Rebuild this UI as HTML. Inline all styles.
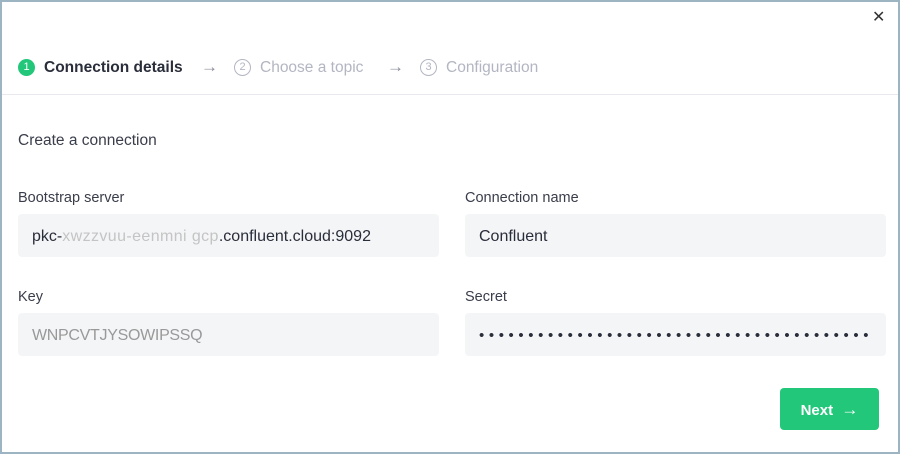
<!DOCTYPE html>
<html><head><style>
*{margin:0;padding:0;box-sizing:border-box}
body{width:900px;height:454px;background:#fff;font-family:"Liberation Sans",sans-serif;position:relative;overflow:hidden}
.a{position:absolute;white-space:nowrap}
.in{position:absolute;background:#f4f5f7;border-radius:4px;height:43px;font-size:16px;color:#2a2d3a;line-height:46px;padding-left:14px;white-space:nowrap}
.lbl{position:absolute;font-size:14.5px;color:#3a3d4a}
.g{color:#b3b6c2}
</style></head><body>
<div class="a" style="left:0;top:0;width:900px;height:454px;border:2px solid #9db4c3"></div>
<div class="a" style="left:872px;top:7px;font-size:16px;color:#333">✕</div>
<div class="a" style="left:18px;top:59px;width:17px;height:17px;border-radius:50%;background:#22c77a;color:#fff;font-size:11px;text-align:center;line-height:17px">1</div>
<div class="a" style="left:44px;top:59px;font-size:15.5px;font-weight:bold;color:#2a2d3a">Connection details</div>
<div class="a" style="left:201px;top:57px;font-size:17px;color:#8a8d99">→</div>
<div class="a g" style="left:234px;top:59px;width:17px;height:17px;border-radius:50%;border:1.3px solid #b3b6c2;font-size:11px;text-align:center;line-height:15px">2</div>
<div class="a g" style="left:260px;top:59px;font-size:15.5px">Choose a topic</div>
<div class="a" style="left:387px;top:57px;font-size:17px;color:#8a8d99">→</div>
<div class="a g" style="left:420px;top:59px;width:17px;height:17px;border-radius:50%;border:1.3px solid #b3b6c2;font-size:11px;text-align:center;line-height:15px">3</div>
<div class="a g" style="left:446px;top:59px;font-size:15.5px">Configuration</div>
<div class="a" style="left:2px;top:94px;width:896px;height:1px;background:#e8e9ee"></div>
<div class="a" style="left:18px;top:132px;font-size:15.5px;color:#3a3d4a">Create a connection</div>
<div class="lbl" style="left:18px;top:190px">Bootstrap server</div>
<div class="lbl" style="left:465px;top:190px">Connection name</div>
<div class="in" style="left:18px;top:214px;width:421px">pkc-<span style="color:#c4c4c4;letter-spacing:0.4px">xwzzvuu-eenmni gcp</span>.confluent.cloud:9092</div>
<div class="in" style="left:465px;top:214px;width:421px">Confluent</div>
<div class="lbl" style="left:18px;top:289px">Key</div>
<div class="lbl" style="left:465px;top:289px">Secret</div>
<div class="in" style="left:18px;top:313px;width:421px;color:#999;letter-spacing:-0.3px">WNPCVTJYSOWIPSSQ</div>
<div class="in" style="left:465px;top:313px;width:421px;font-size:15px;letter-spacing:4.6px;overflow:hidden;line-height:45px">••••••••••••••••••••••••••••••••••••••••</div>
<div class="a" style="left:780px;top:388px;width:99px;height:42px;background:#22c77a;border-radius:4px;color:#fff;font-weight:bold;font-size:15px;line-height:44px;text-align:center">Next &nbsp;<span style="font-size:17px">→</span></div>
</body></html>
